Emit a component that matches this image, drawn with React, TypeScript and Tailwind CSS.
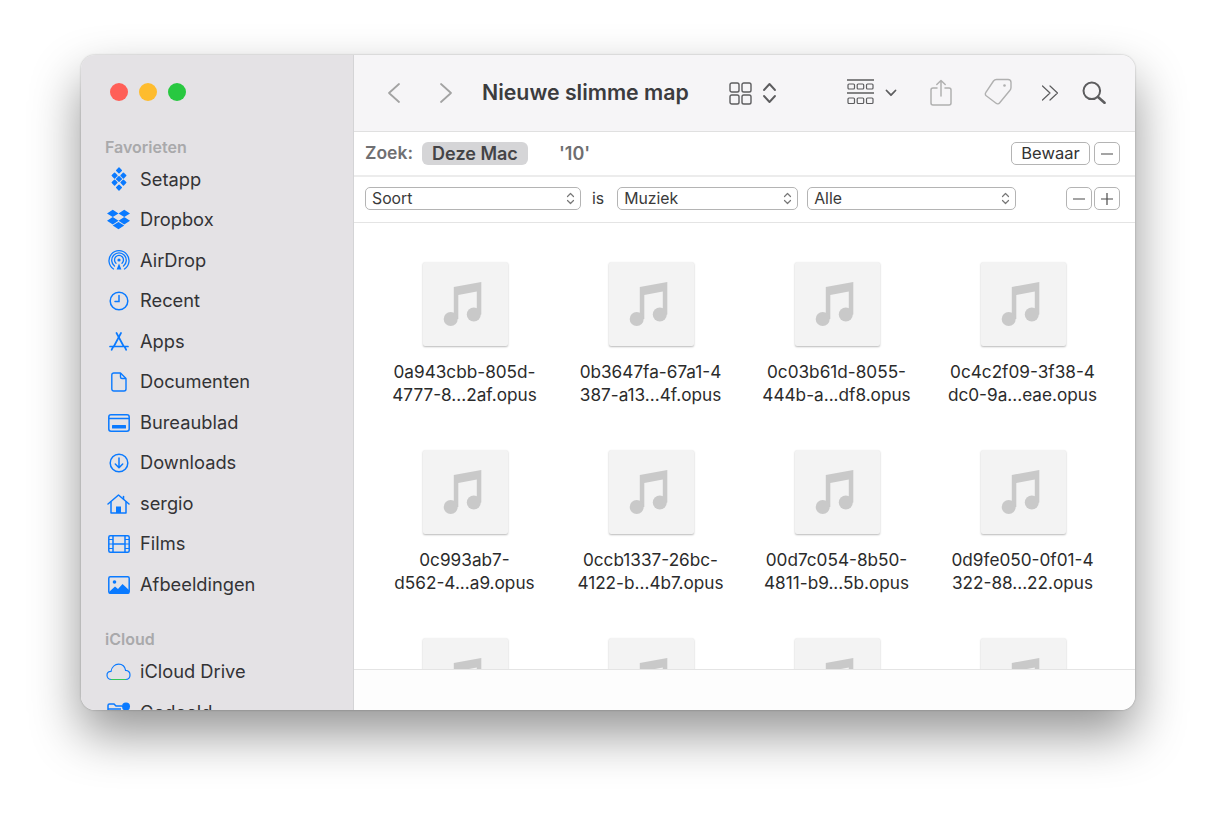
import React from 'react';
import { FaDropbox } from 'react-icons/fa';

const BLUE = '#0a7aff';

const SetappIcon = () => (
  <svg width="16" height="24" viewBox="0 0 16 24" fill={BLUE}>
    {[[8, 3.4], [3.6, 8.6], [12.4, 8.6], [8, 12], [3.6, 15.6], [12.4, 15.6], [8, 20.6]].map(([x, y], i) => (
      <rect key={i} x={x - 2.35} y={y - 2.35} width="4.7" height="4.7" rx="0.7" transform={`rotate(45 ${x} ${y})`} />
    ))}
  </svg>
);

const AirDropIcon = () => (
  <svg width="22" height="22" viewBox="0 0 22 22" fill="none" stroke={BLUE} strokeWidth="1.3" strokeLinecap="round">
    <path d="M5.5 20A10 10 0 1 1 16.5 20" />
    <path d="M6.5 17A7.3 7.3 0 1 1 15.5 17" />
    <path d="M8 14.3A4.5 4.5 0 1 1 14 14.3" />
    <circle cx="11" cy="11" r="1.6" fill={BLUE} stroke="none" />
    <path d="M8.6 20.5L11 14.5L13.4 20.5Z" fill={BLUE} stroke="none" />
  </svg>
);

const RecentIcon = () => (
  <svg width="20" height="20" viewBox="0 0 20 20" fill="none" stroke={BLUE} strokeWidth="1.5" strokeLinecap="round">
    <circle cx="10" cy="10" r="8.8" />
    <path d="M10 4.5V10.5H6" />
  </svg>
);

const AppsIcon = () => (
  <svg width="20" height="19" viewBox="0 0 20 19" fill="none" stroke={BLUE} strokeWidth="1.7" strokeLinecap="round">
    <path d="M7.5 1L14.5 14" />
    <path d="M12 1L4.8 14.5" />
    <path d="M1 14.5H19" />
    <path d="M4 15L2.6 17.8M15.8 15L17.2 17.8" />
  </svg>
);

const DocIcon = () => (
  <svg width="16" height="20" viewBox="0 0 16 20" fill="none" stroke={BLUE} strokeWidth="1.4" strokeLinejoin="round">
    <path d="M2.8 1H9.5L15 6.5V17a2 2 0 0 1-2 2H2.8a2 2 0 0 1-2-2V3a2 2 0 0 1 2-2Z" />
    <path d="M9.5 1V5a1.5 1.5 0 0 0 1.5 1.5H15" />
  </svg>
);

const DesktopIcon = () => (
  <svg width="22" height="18" viewBox="0 0 22 18" fill="none" stroke={BLUE} strokeWidth="1.5">
    <rect x="0.8" y="0.8" width="20.4" height="16.4" rx="2.2" />
    <path d="M1 4.5H21" />
    <rect x="4" y="11" width="14" height="3.4" rx="0.5" fill={BLUE} stroke="none" />
  </svg>
);

const DownloadIcon = () => (
  <svg width="20" height="20" viewBox="0 0 20 20" fill="none" stroke={BLUE} strokeWidth="1.5" strokeLinecap="round" strokeLinejoin="round">
    <circle cx="10" cy="10" r="8.8" />
    <path d="M10 5V14.5M6.3 11L10 14.7L13.7 11" />
  </svg>
);

const HomeIcon = () => (
  <svg width="23" height="20" viewBox="0 0 23 20" fill="none" stroke={BLUE} strokeWidth="1.5" strokeLinecap="round" strokeLinejoin="round">
    <path d="M1 10L11.5 1L22 10" />
    <path d="M4 8V19H19V8" />
    <path d="M16.5 2.5V5" />
    <rect x="9" y="12.5" width="5" height="6.5" fill={BLUE} stroke="none" />
  </svg>
);

const FilmIcon = () => (
  <svg width="22" height="18" viewBox="0 0 22 18" fill="none" stroke={BLUE} strokeWidth="1.5">
    <rect x="0.8" y="0.8" width="20.4" height="16.4" rx="1.5" />
    <path d="M5 1V17M17 1V17M5 9H17" />
    <path d="M1 4.5H5M1 9H5M1 13.5H5M17 4.5H21M17 9H21M17 13.5H21" strokeWidth="1" />
  </svg>
);

const PictureIcon = () => (
  <svg width="22" height="18" viewBox="0 0 22 18" fill="none">
    <rect x="0.8" y="0.8" width="20.4" height="16.4" rx="1.5" stroke={BLUE} strokeWidth="1.5" />
    <circle cx="6.5" cy="6" r="1.8" fill={BLUE} />
    <path d="M1 16L7 10.5L10 13L14.5 8L21 14V17.5H1Z" fill={BLUE} />
  </svg>
);

const CloudIcon = () => (
  <svg width="25" height="18" viewBox="0 0 25 18" fill="none" strokeWidth="1.2" strokeLinecap="round">
    <path d="M5.5 16.5C2.8 16.5 1 14.6 1 12.3C1 10 2.8 8.4 5 8.4C5.8 4 9 1.2 12.6 1.2C16.4 1.2 19 4 19.6 7.4C22.2 7.6 24 9.6 24 12C24 14.6 22.2 16.5 19.4 16.5" stroke={BLUE} />
    <path d="M5.5 16.5H19.4" stroke="#34c759" />
  </svg>
);

const SharedIcon = () => (
  <svg width="24" height="20" viewBox="0 0 24 20" fill="none" stroke={BLUE} strokeWidth="1.5">
    <path d="M1 17V3.5A1.5 1.5 0 0 1 2.5 2H7L9 4H15" />
    <path d="M1 7H14" />
    <circle cx="19" cy="4.5" r="4" fill={BLUE} stroke="none" />
  </svg>
);

const favorites: [string, React.ReactNode][] = [
  ['Setapp', <SetappIcon />],
  ['Dropbox', <FaDropbox size={23} color={BLUE} />],
  ['AirDrop', <AirDropIcon />],
  ['Recent', <RecentIcon />],
  ['Apps', <AppsIcon />],
  ['Documenten', <DocIcon />],
  ['Bureaublad', <DesktopIcon />],
  ['Downloads', <DownloadIcon />],
  ['sergio', <HomeIcon />],
  ['Films', <FilmIcon />],
  ['Afbeeldingen', <PictureIcon />],
];

const files = [
  ['0a943cbb-805d-', '4777-8...2af.opus'],
  ['0b3647fa-67a1-4', '387-a13...4f.opus'],
  ['0c03b61d-8055-', '444b-a...df8.opus'],
  ['0c4c2f09-3f38-4', 'dc0-9a...eae.opus'],
  ['0c993ab7-', 'd562-4...a9.opus'],
  ['0ccb1337-26bc-', '4122-b...4b7.opus'],
  ['00d7c054-8b50-', '4811-b9...5b.opus'],
  ['0d9fe050-0f01-4', '322-88...22.opus'],
  ['', ''],
  ['', ''],
  ['', ''],
  ['', ''],
];

const SidebarRow = ({ label, icon }: { label: string; icon: React.ReactNode }) => (
  <div className="flex h-[40.55px] shrink-0 items-center">
    <div className="flex w-[59px] shrink-0 items-center justify-center pl-[21px] pr-[5px]">{icon}</div>
    <span className="text-[18.3px] text-[#333335]">{label}</span>
  </div>
);

const Select = ({ label, className }: { label: string; className: string }) => (
  <div className={`flex h-[23px] items-center justify-between rounded-[5px] border border-[#b4b4b4] pl-[6px] pr-[5px] text-[15.8px] text-[#3a3a3a] ${className}`}>
    <span>{label}</span>
    <svg width="9" height="13" viewBox="0 0 9 13" fill="none" stroke="#777" strokeWidth="1.2" strokeLinecap="round" strokeLinejoin="round">
      <path d="M1.5 4.5L4.5 1.5L7.5 4.5M1.5 8.5L4.5 11.5L7.5 8.5" />
    </svg>
  </div>
);

const SmallButton = ({ plus }: { plus?: boolean }) => (
  <div className="flex h-[23px] w-[26px] items-center justify-center rounded-[5px] border border-[#b4b4b4]">
    <svg width="14" height="14" viewBox="0 0 14 14" stroke="#4a4a4a" strokeWidth="1.2">
      <path d="M1 7H13" />
      {plus && <path d="M7 1V13" />}
    </svg>
  </div>
);

const FileCell = ({ lines }: { lines: string[] }) => (
  <div className="flex h-[188px] flex-col items-center">
    <div className="h-[84px] w-[85px] rounded-[2px] bg-[#f3f3f3] shadow-[0_1px_2px_rgba(0,0,0,0.28)]">
      <svg width="85" height="84" viewBox="0 0 85 84" fill="#c9c9c9">
        <path d="M30.8 25L58.3 20V52.5H53.8L53.8 29.5L35.3 33V57H30.8Z" />
        <circle cx="27.7" cy="57" r="7" />
        <circle cx="50.8" cy="52.5" r="7" />
      </svg>
    </div>
    <div className="mt-[14px] pr-[2px] text-center text-[17.2px] leading-[23px] text-[#2b2b2b]">
      <div>{lines[0]}</div>
      <div>{lines[1]}</div>
    </div>
  </div>
);

export default function App() {
  return (
    <div className="h-[817px] w-[1216px] overflow-hidden bg-white pl-[81px] pt-[55px] font-['Inter',sans-serif]">
      <div className="flex h-[655px] w-[1054px] overflow-hidden rounded-[14px] bg-white shadow-[0_24px_50px_rgba(0,0,0,0.42),0_0_2px_rgba(0,0,0,0.3)]">
        <aside className="flex w-[273px] shrink-0 flex-col overflow-hidden border-r border-[#d4d4d6] bg-[#e4e2e5]">
          <div className="flex shrink-0 gap-[11px] pl-[29px] pt-[28px]">
            <span className="h-[18px] w-[18px] rounded-full bg-[#ff5f57]" />
            <span className="h-[18px] w-[18px] rounded-full bg-[#febc2e]" />
            <span className="h-[18px] w-[18px] rounded-full bg-[#28c840]" />
          </div>
          <div className="mt-[36px] h-[20px] shrink-0 pl-[24px] text-[16px] font-semibold leading-[20px] text-[#a9a9ab]">Favorieten</div>
          <div className="mt-[2px] flex shrink-0 flex-col">
            {favorites.map(([label, icon]) => (
              <SidebarRow key={label} label={label} icon={icon} />
            ))}
          </div>
          <div className="mt-[24px] h-[20px] shrink-0 pl-[24px] text-[16px] font-semibold leading-[20px] text-[#a9a9ab]">iCloud</div>
          <div className="mt-[2.5px] flex shrink-0 flex-col">
            <SidebarRow label="iCloud Drive" icon={<CloudIcon />} />
            <SidebarRow label="Gedeeld" icon={<SharedIcon />} />
          </div>
        </aside>

        <main className="flex min-w-0 flex-1 flex-col">
          <header className="flex h-[77px] shrink-0 items-center border-b border-[#e0e0e0] bg-[#f6f5f7]">
            <svg className="ml-[33px]" width="14" height="22" viewBox="0 0 14 22" fill="none" stroke="#a3a3a3" strokeWidth="1.8" strokeLinecap="round" strokeLinejoin="round">
              <path d="M12 2L2 11L12 20" />
            </svg>
            <svg className="ml-[38px]" width="14" height="22" viewBox="0 0 14 22" fill="none" stroke="#a3a3a3" strokeWidth="1.8" strokeLinecap="round" strokeLinejoin="round">
              <path d="M2 2L12 11L2 20" />
            </svg>
            <h1 className="-mt-[1px] ml-[29px] w-[207px] whitespace-nowrap text-[21.3px] font-semibold text-[#3c3c3e]">Nieuwe slimme map</h1>
            <svg className="ml-[40px]" width="23" height="23" viewBox="0 0 23 23" fill="none" stroke="#5d5d5f" strokeWidth="1.4">
              <rect x="1" y="1" width="9" height="9" rx="1.8" />
              <rect x="13" y="1" width="9" height="9" rx="1.8" />
              <rect x="1" y="13" width="9" height="9" rx="1.8" />
              <rect x="13" y="13" width="9" height="9" rx="1.8" />
            </svg>
            <svg className="ml-[10px]" width="15" height="22" viewBox="0 0 15 22" fill="none" stroke="#5d5d5f" strokeWidth="1.9" strokeLinecap="round" strokeLinejoin="round">
              <path d="M2 8L7.5 2L13 8M2 14L7.5 20L13 14" />
            </svg>
            <svg className="-mt-[2px] ml-[70px]" width="27" height="26" viewBox="0 0 27 26" fill="none" stroke="#5d5d5f" strokeWidth="1.2">
              <path d="M0 1H27M0 14H27" strokeWidth="1.4" />
              <rect x="1" y="5" width="6.5" height="5" rx="1" />
              <rect x="10.2" y="5" width="6.5" height="5" rx="1" />
              <rect x="19.5" y="5" width="6.5" height="5" rx="1" />
              <rect x="1" y="19" width="6.5" height="5.5" rx="1" />
              <rect x="10.2" y="19" width="6.5" height="5.5" rx="1" />
              <rect x="19.5" y="19" width="6.5" height="5.5" rx="1" />
            </svg>
            <svg className="ml-[11px]" width="12" height="8" viewBox="0 0 12 8" fill="none" stroke="#5d5d5f" strokeWidth="1.8" strokeLinecap="round" strokeLinejoin="round">
              <path d="M1.5 1.5L6 6.2L10.5 1.5" />
            </svg>
            <svg className="-mt-[2px] ml-[33px]" width="22" height="27" viewBox="0 0 22 27" fill="none" stroke="#b0b0b0" strokeWidth="1.5" strokeLinecap="round" strokeLinejoin="round">
              <path d="M7 9H3a2 2 0 0 0-2 2V24a2 2 0 0 0 2 2H19a2 2 0 0 0 2-2V11a2 2 0 0 0-2-2H15" />
              <path d="M11 17V1.5M6.8 5.5L11 1.5L15.2 5.5" />
            </svg>
            <svg className="-mt-[2px] ml-[32px]" width="29" height="28" viewBox="0 0 29 28" fill="none" stroke="#b0b0b0" strokeWidth="1.4" strokeLinejoin="round">
              <path d="M12.5 1.5H24a3 3 0 0 1 3 3V9.5a4 4 0 0 1-1 2.7L15.5 25a2.4 2.4 0 0 1-3.4 0.3L2.2 17.8a2.4 2.4 0 0 1-0.3-3.4L9.5 3a4 4 0 0 1 3-1.5Z" />
              <circle cx="20.5" cy="7.5" r="1.3" fill="#b0b0b0" stroke="none" />
            </svg>
            <svg className="ml-[28px]" width="18" height="16" viewBox="0 0 18 16" fill="none" stroke="#5d5d5f" strokeWidth="1.2" strokeLinecap="round" strokeLinejoin="round">
              <path d="M1.5 1L9 8L1.5 15M9 1L16.5 8L9 15" />
            </svg>
            <svg className="-mt-[2px] ml-[23px]" width="24" height="23" viewBox="0 0 24 23" fill="none" stroke="#5d5d5f" strokeWidth="2" strokeLinecap="round">
              <circle cx="9.8" cy="9.8" r="8.3" />
              <path d="M16 16L22.5 21.8" strokeWidth="2.6" />
            </svg>
          </header>

          <div className="flex h-[45px] shrink-0 items-center border-b-2 border-[#ececec] pl-[11px] pr-[15px]">
            <span className="text-[17.5px] font-semibold text-[#707072]">Zoek:</span>
            <span className="ml-[9px] flex h-[23px] w-[106px] items-center justify-center rounded-[6px] bg-[#d5d5d7] text-[18px] font-semibold text-[#444446]">Deze Mac</span>
            <span className="ml-[31px] text-[18px] font-semibold text-[#6e6e70]">'10'</span>
            <div className="ml-auto flex items-center gap-[4px]">
              <div className="flex h-[23px] w-[79px] items-center justify-center rounded-[5px] border border-[#b4b4b4] text-[16.5px] text-[#333]">Bewaar</div>
              <SmallButton />
            </div>
          </div>

          <div className="flex h-[46px] shrink-0 items-center border-b border-[#e4e4e4] pb-[2px] pl-[11px] pr-[15px]">
            <Select label="Soort" className="w-[216px]" />
            <span className="ml-[11px] text-[15.8px] text-[#3a3a3a]">is</span>
            <Select label="Muziek" className="ml-[13px] w-[181px]" />
            <Select label="Alle" className="ml-[9px] w-[209px]" />
            <div className="ml-auto flex items-center gap-[2px]">
              <SmallButton />
              <SmallButton plus />
            </div>
          </div>

          <div className="min-h-0 flex-1 overflow-hidden pl-[18.5px] pt-[39px]">
            <div className="grid grid-cols-[repeat(4,186px)]">
              {files.map((lines, i) => (
                <FileCell key={i} lines={lines} />
              ))}
            </div>
          </div>
          <div className="h-[41px] shrink-0 border-t border-[#e4e4e4] bg-[#fdfdfd]" />
        </main>
      </div>
    </div>
  );
}
